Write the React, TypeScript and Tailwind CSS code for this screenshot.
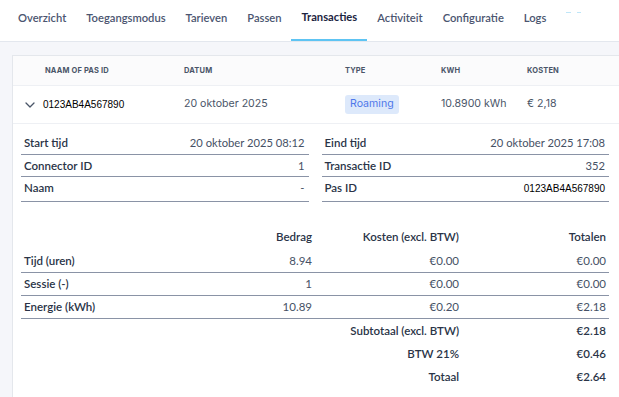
import React from 'react'

const tabs = ['Overzicht', 'Toegangsmodus', 'Tarieven', 'Passen', 'Transacties', 'Activiteit', 'Configuratie', 'Logs']

const leftDetails = [
  { label: 'Start tijd', value: '20 oktober 2025 08:12' },
  { label: 'Connector ID', value: '1' },
  { label: 'Naam', value: '-' },
]

const rightDetails = [
  { label: 'Eind tijd', value: '20 oktober 2025 17:08' },
  { label: 'Transactie ID', value: '352' },
  { label: 'Pas ID', value: '0123AB4A567890', mono: true },
]

const costRows = [
  { label: 'Tijd (uren)', amount: '8.94', cost: '€0.00', total: '€0.00' },
  { label: 'Sessie (-)', amount: '1', cost: '€0.00', total: '€0.00' },
  { label: 'Energie (kWh)', amount: '10.89', cost: '€0.20', total: '€2.18' },
]

const summary = [
  { label: 'Subtotaal (excl. BTW)', value: '€2.18' },
  { label: 'BTW 21%', value: '€0.46' },
  { label: 'Totaal', value: '€2.64' },
]

const heights = ['h-[23px]', 'h-[22px]', 'h-[25px]']

function Chevron() {
  return (
    <svg width="10" height="6" viewBox="0 0 10 6" fill="none" className="shrink-0">
      <path d="M1 1l4 4 4-4" stroke="#4a5568" strokeWidth="1.3" strokeLinecap="round" strokeLinejoin="round" />
    </svg>
  )
}

function DetailList({ items }: { items: { label: string; value: string; mono?: boolean }[] }) {
  return (
    <div className="flex flex-col">
      {items.map((it, i) => (
        <div
          key={it.label}
          className={`flex items-start justify-between border-b border-[#8a93a6] pl-[3px] pr-[4px] pt-[5px] ${heights[i]}`}
        >
          <span className="font-semibold text-[#2a3447]">{it.label}</span>
          {it.mono ? (
            <span className="font-['Liberation_Sans',sans-serif] text-[10px] text-black pt-[2px]">{it.value}</span>
          ) : (
            <span className="text-[11.2px] text-[#465165]">{it.value}</span>
          )}
        </div>
      ))}
    </div>
  )
}

export default function App() {
  return (
    <div className="w-[619px] h-[397px] overflow-hidden bg-white font-['Lato',sans-serif] text-[11.5px] leading-none">
      {/* Tabs */}
      <nav className="relative flex h-[42px] border-b border-[#e3e7ee] pl-2 text-[11.2px]">
        {tabs.map((t) => (
          <div
            key={t}
            className={
              t === 'Transacties'
                ? 'flex items-center px-[10px] pb-[5px] font-bold text-[#1c2541] border-b-2 border-[#5ec4f3]'
                : 'flex items-center px-[10px] pb-[5px] font-semibold text-[#4b5570]'
            }
          >
            {t}
          </div>
        ))}
        <div className="absolute left-[566px] top-[12px] flex gap-[6px]">
          <div className="h-px w-[5px] bg-[#bfe6f8]" />
          <div className="h-px w-[4px] bg-[#bfe6f8]" />
        </div>
      </nav>

      {/* Content */}
      <div className="h-full bg-[#f5f6fa] pl-3 pt-[13px]">
        <div className="h-full bg-white border-l border-t border-[#e4e7ec]">
          {/* Table header */}
          <div className="grid h-[30px] grid-cols-[139px_161px_96px_86px_1fr] items-center border-b border-[#eef0f4] bg-[#fbfbfc] pl-[32px] font-['Inter',sans-serif] text-[7.5px] font-bold uppercase tracking-[0.02em] text-[#4a5568]">
            <span>Naam of pas ID</span>
            <span>Datum</span>
            <span>Type</span>
            <span>kWh</span>
            <span>Kosten</span>
          </div>

          {/* Row */}
          <div className="grid h-[38px] grid-cols-[159px_161px_96px_86px_1fr] items-center border-b border-[#eef0f4] pl-[12px] font-['Inter',sans-serif] text-[10.6px] text-[#4a5568]">
            <div className="flex items-center gap-[8px]">
              <Chevron />
              <span className="font-['Liberation_Sans',sans-serif] text-[10px] text-black">0123AB4A567890</span>
            </div>
            <span>20 oktober 2025</span>
            <div>
              <span className="inline-flex h-[19px] items-center rounded-[3px] bg-[#dde9fb] px-[5px] text-[#4f78ea]">Roaming</span>
            </div>
            <span>10.8900 kWh</span>
            <span>€ 2,18</span>
          </div>

          {/* Details */}
          <div className="w-[596px] pl-[8px] pt-[8px]">
            <div className="grid grid-cols-2 gap-[13px]">
              <DetailList items={leftDetails} />
              <DetailList items={rightDetails} />
            </div>

            {/* Costs */}
            <div className="mt-[24px] flex flex-col">
              <div className="grid h-[24px] grid-cols-[141px_147px_147px_147px] items-start pl-[3px] pr-[3px] pt-[5px] text-right font-semibold text-[#2a3447]">
                <span />
                <span>Bedrag</span>
                <span>Kosten (excl. BTW)</span>
                <span>Totalen</span>
              </div>
              {costRows.map((r) => (
                <div
                  key={r.label}
                  className="grid h-[23px] grid-cols-[141px_147px_147px_147px] items-start border-b border-[#8a93a6] pl-[3px] pr-[3px] pt-[5px]"
                >
                  <span className="font-semibold text-[#2a3447]">{r.label}</span>
                  <span className="text-right text-[#465165]">{r.amount}</span>
                  <span className="text-right text-[#465165]">{r.cost}</span>
                  <span className="text-right text-[#465165]">{r.total}</span>
                </div>
              ))}
              {summary.map((s) => (
                <div
                  key={s.label}
                  className="grid h-[23px] grid-cols-[141px_147px_147px_147px] items-start pl-[3px] pr-[3px] pt-[6px] font-semibold text-[#2a3447]"
                >
                  <span />
                  <span />
                  <span className="text-right">{s.label}</span>
                  <span className="text-right">{s.value}</span>
                </div>
              ))}
            </div>
          </div>
        </div>
      </div>
    </div>
  )
}
